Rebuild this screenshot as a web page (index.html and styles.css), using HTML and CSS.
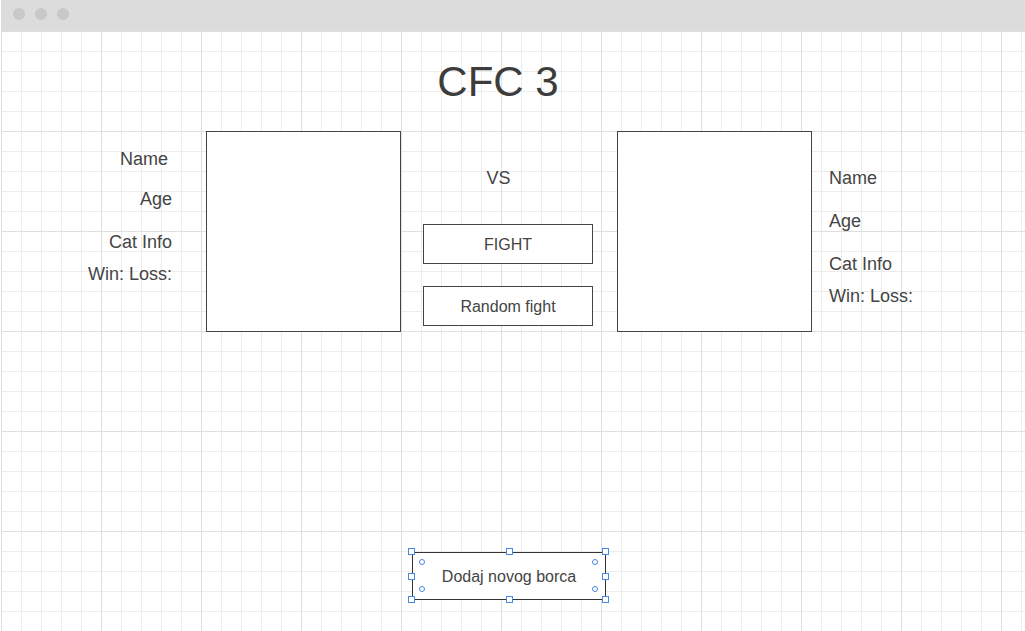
FILE: index.html
```html
<!DOCTYPE html>
<html lang="sr">
<head>
<meta charset="utf-8">
<title>CFC 3</title>
<link rel="stylesheet" href="styles.css">
</head>
<body>
<div class="window">
  <header class="titlebar">
    <span class="dot"></span>
    <span class="dot"></span>
    <span class="dot"></span>
  </header>
  <main class="canvas">
    <h1 class="title">CFC 3</h1>
    <section class="arena">
      <div class="stats stats-left">
        <p class="stat stat-name">Name</p>
        <p class="stat">Age</p>
        <p class="stat">Cat Info</p>
        <p class="stat">Win: Loss:</p>
      </div>
      <div class="portrait portrait-left"></div>
      <div class="center">
        <p class="vs">VS</p>
        <button class="btn btn-fight">FIGHT</button>
        <button class="btn btn-random">Random fight</button>
      </div>
      <div class="portrait portrait-right"></div>
      <div class="stats stats-right">
        <p class="stat">Name</p>
        <p class="stat">Age</p>
        <p class="stat">Cat Info</p>
        <p class="stat">Win: Loss:</p>
      </div>
    </section>
    <div class="footer">
      <div class="selected">
        <button class="btn btn-add">Dodaj novog borca</button>
        <span class="handle h-tl"></span>
        <span class="handle h-tc"></span>
        <span class="handle h-tr"></span>
        <span class="handle h-ml"></span>
        <span class="handle h-mr"></span>
        <span class="handle h-bl"></span>
        <span class="handle h-bc"></span>
        <span class="handle h-br"></span>
        <span class="knob k-tl"></span>
        <span class="knob k-tr"></span>
        <span class="knob k-bl"></span>
        <span class="knob k-br"></span>
      </div>
    </div>
  </main>
</div>
</body>
</html>
```

FILE: styles.css
```css
* { box-sizing: border-box; }

html, body {
  margin: 0;
  padding: 0;
  background: #ffffff;
}

body {
  font-family: "Liberation Sans", Arial, sans-serif;
  color: #444444;
  overflow: hidden;
}

.window {
  width: 1024px;
  height: 631px;
  margin-left: 1px;
  display: flex;
  flex-direction: column;
}

.titlebar {
  height: 31px;
  flex: 0 0 31px;
  background: #dcdcdc;
  display: flex;
  align-items: flex-start;
  gap: 10px;
  padding: 8px 0 0 12px;
}

.dot {
  width: 12px;
  height: 12px;
  border-radius: 50%;
  background: #c8c8c8;
}

.canvas {
  position: relative;
  flex: 1 1 auto;
  background-color: #ffffff;
  background-image:
    linear-gradient(to right, #dfdfdf 1px, transparent 1px),
    linear-gradient(to bottom, #dfdfdf 1px, transparent 1px),
    linear-gradient(to right, #ececec 1px, transparent 1px),
    linear-gradient(to bottom, #ececec 1px, transparent 1px);
  background-size: 100px 100px, 100px 100px, 20px 20px, 20px 20px;
}

.title {
  margin: 0;
  padding: 30px 30px 0 0;
  font-size: 42px;
  line-height: 41px;
  font-weight: normal;
  text-align: center;
  color: #3c3c3c;
}

.arena {
  margin-top: 29px;
  display: flex;
  align-items: flex-start;
}

.stats {
  display: flex;
  flex-direction: column;
}

.stat {
  margin: 0;
  font-size: 18px;
  line-height: 20px;
  color: #444444;
  white-space: nowrap;
}

.stats-left {
  width: 171px;
  text-align: right;
}

.stats-left .stat:nth-child(1) { margin-top: 18px; padding-right: 4px; }
.stats-left .stat:nth-child(2) { margin-top: 20px; }
.stats-left .stat:nth-child(3) { margin-top: 23px; }
.stats-left .stat:nth-child(4) { margin-top: 12px; }

.stats-right {
  margin-left: 17px;
}

.stats-right .stat:nth-child(1) { margin-top: 37px; }
.stats-right .stat:nth-child(2) { margin-top: 23px; }
.stats-right .stat:nth-child(3) { margin-top: 23px; }
.stats-right .stat:nth-child(4) { margin-top: 12px; }

.portrait {
  width: 195px;
  height: 201px;
  border: 1px solid #444444;
  background: #ffffff;
}

.portrait-left { margin-left: 34px; }
.portrait-right { margin-left: 24px; }

.center {
  margin-left: 22px;
  width: 170px;
  padding-top: 37px;
  display: flex;
  flex-direction: column;
}

.vs {
  margin: 0;
  font-size: 18px;
  line-height: 20px;
  text-align: center;
  padding-right: 19px;
  color: #444444;
}

.btn {
  font-family: "Liberation Sans", Arial, sans-serif;
  font-size: 16px;
  color: #444444;
  background: #ffffff;
  border: 1px solid #444444;
  border-radius: 0;
  padding: 0;
  margin: 0;
  display: flex;
  align-items: center;
  justify-content: center;
}

.btn-fight {
  margin-top: 36px;
  width: 170px;
  height: 40px;
  padding-top: 1px;
}

.btn-random {
  margin-top: 22px;
  width: 170px;
  height: 40px;
  padding-top: 1px;
}

.footer {
  margin-top: 220px;
  padding-left: 411px;
  display: flex;
}

.selected {
  position: relative;
  width: 194px;
  height: 48px;
}

.btn-add {
  width: 194px;
  height: 48px;
  padding-top: 1px;
  border-color: #333333;
  color: #444444;
}

.handle {
  position: absolute;
  width: 7px;
  height: 7px;
  background: #ffffff;
  border: 1px solid #4a86e8;
}

.h-tl { left: -4px; top: -4px; }
.h-tc { left: calc(50% - 3px); top: -4px; }
.h-tr { right: -3px; top: -4px; }
.h-ml { left: -4px; top: calc(50% - 3px); }
.h-mr { right: -3px; top: calc(50% - 3px); }
.h-bl { left: -4px; bottom: -3px; }
.h-bc { left: calc(50% - 3px); bottom: -3px; }
.h-br { right: -3px; bottom: -3px; }

.knob {
  position: absolute;
  width: 6px;
  height: 6px;
  border-radius: 50%;
  background: #ffffff;
  border: 1px solid #4a86e8;
}

.k-tl { left: 7px; top: 7px; }
.k-tr { right: 8px; top: 7px; }
.k-bl { left: 7px; bottom: 8px; }
.k-br { right: 8px; bottom: 8px; }
```
